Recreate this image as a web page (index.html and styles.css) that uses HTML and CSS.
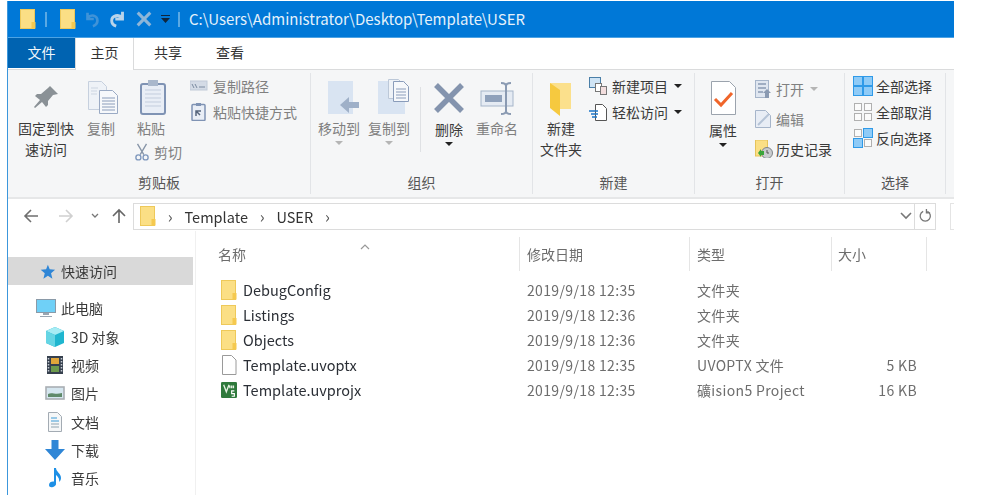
FILE: index.html
```html
<!DOCTYPE html>
<html lang="zh-CN">

<head>
    <meta charset="UTF-8">
    <title>USER</title>
    <link rel="stylesheet" href="styles.css">
</head>

<body>
    <svg class="defs" width="0" height="0">
        <symbol id="folder" viewBox="0 0 16 20">
            <rect x="0.5" y="0.5" width="14" height="19" fill="#fbdf85" stroke="#eec95a"/>
            <rect x="11.5" y="13" width="4" height="6.5" fill="#f5c94f"/>
        </symbol>
    </svg>

    <div class="window">
        <header class="titlebar">
            <svg class="t-folder"><use href="#folder"/></svg>
            <span class="t-sep"></span>
            <svg class="t-folder t-second"><use href="#folder"/></svg>
            <svg class="t-icon t-undo" viewBox="0 0 20 20"><path d="M5 3v7h7M5 9c4-5 11-3 11 3 0 3-2 5-5 6" fill="none" stroke="#3f93d8" stroke-width="3"/></svg>
            <svg class="t-icon" viewBox="0 0 20 20"><path d="M15 2v8H7M15 9c-4-5-12-3-12 3 0 3 2 5 5 6" fill="none" stroke="#b9d4ea" stroke-width="3.2"/></svg>
            <svg class="t-icon t-x" viewBox="0 0 20 20"><path d="M3 3l14 14M17 3L3 17" stroke="#8fb6d8" stroke-width="3.4"/></svg>
            <svg class="t-drop" viewBox="0 0 9 8"><path d="M0 0h9v1H0zM0 3h9L4.500 8z" fill="#10263c"/></svg>
            <span class="t-sep t-sep2"></span>
            <span class="t-path">C:\Users\Administrator\Desktop\Template\USER</span>
        </header>

        <nav class="tabs">
            <span class="tab tab-file">文件</span>
            <span class="tab tab-active">主页</span>
            <span class="tab tab-share">共享</span>
            <span class="tab tab-view">查看</span>
        </nav>

        <section class="ribbon">
            <div class="group group-clip">
                <div class="group-body">
                    <div class="big big-pin">
                        <svg class="big-icon" viewBox="0 0 40 40"><path d="M24 10l8 8-5 1-5 6 0 4-2 2-4-5-7 6-1-1 6-7-5-4 2-2 4 0 7-6z" fill="#8a9196"/></svg>
                        <span>固定到快<br>速访问</span>
                    </div>
                    <div class="big big-copy dim">
                        <svg class="big-icon" viewBox="0 0 40 40"><path d="M7.500 5.500h13l5 5v23h-18z" fill="#eef2f7" stroke="#c6d0de"/><path d="M18.500 14.500h13l5 5v18h-18z" fill="#f6f8fb" stroke="#9aaac4"/><path d="M21 22h13M21 25h13M21 28h13M21 31h13M21 34h13" stroke="#8a9cba"/><path d="M10 12h7M10 15h6M10 18h6" stroke="#ccd5e1"/></svg>
                        <span>复制</span>
                    </div>
                    <div class="paste-col">
                        <div class="big dim">
                            <svg class="big-icon" viewBox="0 0 40 40"><rect x="10" y="8" width="24" height="30" rx="2" fill="#e9eef6" stroke="#7f93b4" stroke-width="2"/><rect x="17" y="4" width="10" height="6" fill="#aab8cc"/><path d="M14 14h16M14 18h16M14 22h16M14 26h16M14 30h16" stroke="#c3cddd"/></svg>
                            <span>粘贴</span>
                        </div>
                        <div class="small dim cut">
                            <svg class="s-icon" viewBox="0 0 16 20"><path d="M3 1l7 12M13 1L6 13" stroke="#8795a8" stroke-width="1.500"/><circle cx="4" cy="16" r="2.800" fill="none" stroke="#7f98bd" stroke-width="1.500"/><circle cx="12" cy="16" r="2.800" fill="none" stroke="#7f98bd" stroke-width="1.500"/></svg>
                            <span>剪切</span>
                        </div>
                    </div>
                    <div class="small-col small-col-clip dim">
                        <div class="small">
                            <svg class="s-icon" viewBox="0 0 18 18"><rect x="0" y="4" width="17" height="9" fill="#d4dbe6" stroke="#c1cad8"/><path d="M2 7l2 4M5 7l2 4M9 10h6" stroke="#7a8aa0"/></svg>
                            <span>复制路径</span>
                        </div>
                        <div class="small">
                            <svg class="s-icon" viewBox="0 0 18 18"><rect x="2" y="1.500" width="13" height="16" rx="1" fill="#e9eef6" stroke="#7f93b4" stroke-width="1.500"/><rect x="6" y="0" width="5" height="3" fill="#7f93b4"/><path d="M6 13V8h5M6 8l4 4" stroke="#56657c" stroke-width="1.500" fill="none"/></svg>
                            <span>粘贴快捷方式</span>
                        </div>
                    </div>
                </div>
                <div class="group-label">剪贴板</div>
            </div>

            <div class="group group-org">
                <div class="group-body">
                    <div class="big big-move dim">
                        <svg class="big-icon" viewBox="0 0 40 40"><rect x="9" y="5" width="25" height="33" fill="#d9e4f2"/><path d="M21 30l9-8v5h10v6H30v5z" transform="translate(0 -1)" fill="#9fb0c8"/></svg>
                        <span>移动到</span>
                        <i class="caret caret-dim"></i>
                    </div>
                    <div class="big big-move dim">
                        <svg class="big-icon" viewBox="0 0 40 40"><rect x="9" y="5" width="27" height="33" fill="#d9e4f2"/><path d="M19.500 3.500h10l5 5v14h-15z" fill="#eef2f7" stroke="#bcc8d8"/><path d="M24.500 5.500h10l5 5v15h-15z" fill="#f6f8fb" stroke="#8a9cba"/><path d="M27 13h10M27 16h10M27 19h10M27 22h10" stroke="#8a9cba"/></svg>
                        <span>复制到</span>
                        <i class="caret caret-dim"></i>
                    </div>
                    <span class="vline"></span>
                    <div class="big big-del">
                        <svg class="big-icon" viewBox="0 0 40 40"><path d="M7 9l26 26M33 9L7 35" stroke="#8494ae" stroke-width="5.500"/></svg>
                        <span>删除</span>
                        <i class="caret"></i>
                    </div>
                    <div class="big big-ren dim">
                        <svg class="big-icon" viewBox="0 0 40 40"><rect x="4" y="15" width="32" height="15" fill="#e5ebf3" stroke="#a6b5ca"/><rect x="8" y="19" width="17" height="7" fill="#8fa1bb"/><path d="M29 8v29M24 7c3 0 5 1 5 3 0-2 2-3 5-3M24 38c3 0 5-1 5-3 0 2 2 3 5 3" stroke="#8a9ab2" stroke-width="2" fill="none"/></svg>
                        <span>重命名</span>
                    </div>
                </div>
                <div class="group-label">组织</div>
            </div>

            <div class="group group-new">
                <div class="group-body">
                    <div class="big big-newdir">
                        <svg class="big-icon" viewBox="0 0 40 40"><path d="M9 7h21v26H19v2z" fill="#fbe08c"/><path d="M9 7l10 7v26L9 32z" fill="#f6c93f"/></svg>
                        <span>新建<br>文件夹</span>
                    </div>
                    <div class="small-col">
                        <div class="small">
                            <svg class="s-icon" viewBox="0 0 18 18"><rect x="0.500" y="0.500" width="11" height="10" fill="#cfe4f5" stroke="#4a7fa8"/><rect x="6.500" y="6.500" width="6" height="8" fill="#fff" stroke="#777"/><rect x="11.500" y="9.500" width="6" height="8" fill="#f3dede" stroke="#777"/></svg>
                            <span>新建项目</span>
                            <i class="caret caret-side"></i>
                        </div>
                        <div class="small">
                            <svg class="s-icon" viewBox="0 0 18 18"><path d="M6.500 1.500h7l4 4v12h-11z" fill="#fff" stroke="#555"/><path d="M0 8h9M2 11h7M3 14h5" stroke="#1c76c8" stroke-width="1.300"/></svg>
                            <span>轻松访问</span>
                            <i class="caret caret-side"></i>
                        </div>
                    </div>
                </div>
                <div class="group-label">新建</div>
            </div>

            <div class="group group-open">
                <div class="group-body">
                    <div class="big big-prop">
                        <svg class="big-icon" viewBox="0 0 40 40"><path d="M8.500 5.500h18l6 6v27h-24z" fill="#fff" stroke="#9ba3ad"/><path d="M12 23l6 6 11-12" fill="none" stroke="#f0652a" stroke-width="3"/></svg>
                        <span>属性</span>
                        <i class="caret"></i>
                    </div>
                    <div class="open-col">
                        <div class="small dim">
                            <svg class="s-icon" viewBox="0 0 18 18"><rect x="0.500" y="0.500" width="13" height="17" fill="#dfe6f0" stroke="#a6b5ca"/><path d="M3 4h8M3 8h8M3 12h5" stroke="#8a9ab2" stroke-width="1.500"/><path d="M10 18v-5H8l4-4 4 4h-2v5z" fill="#8a9ab2"/></svg>
                            <span>打开</span>
                            <i class="caret caret-side caret-dim"></i>
                        </div>
                        <div class="small dim">
                            <svg class="s-icon" viewBox="0 0 18 18"><path d="M0.500 0.500h10l5 5v12h-15z" fill="#e8edf5" stroke="#a6b5ca"/><path d="M3 15L14 4" stroke="#b5c3d6" stroke-width="2"/></svg>
                            <span>编辑</span>
                        </div>
                        <div class="small">
                            <svg class="s-icon" viewBox="0 0 18 18"><rect x="0.500" y="0" width="12" height="16" fill="#fbdf85" stroke="#e6c35a"/><circle cx="12" cy="13" r="5.500" fill="#c9cccf" stroke="#7f8488"/><path d="M12 10v3h2" stroke="#555" fill="none"/><path d="M3 13l3-4v2h3v4H6v2z" fill="#3aa53a"/></svg>
                            <span>历史记录</span>
                        </div>
                    </div>
                </div>
                <div class="group-label">打开</div>
            </div>

            <div class="group group-sel">
                <div class="group-body">
                    <div class="small-col">
                        <div class="small">
                            <svg class="s-icon" viewBox="0 0 20 20"><g fill="#8fcbf7" stroke="#2f9ae8"><rect x="0.500" y="0.500" width="9" height="9"/><rect x="10.500" y="0.500" width="9" height="9"/><rect x="0.500" y="10.500" width="9" height="9"/><rect x="10.500" y="10.500" width="9" height="9"/></g></svg>
                            <span>全部选择</span>
                        </div>
                        <div class="small">
                            <svg class="s-icon" viewBox="0 0 20 20"><g fill="#fbfbfb" stroke="#b0b0b0"><rect x="1.500" y="1.500" width="7" height="7"/><rect x="11.500" y="1.500" width="7" height="7"/><rect x="1.500" y="11.500" width="7" height="7"/><rect x="11.500" y="11.500" width="7" height="7"/></g></svg>
                            <span>全部取消</span>
                        </div>
                        <div class="small">
                            <svg class="s-icon" viewBox="0 0 20 20"><g fill="#fbfbfb" stroke="#b0b0b0"><rect x="1.500" y="1.500" width="7" height="7"/><rect x="11.500" y="11.500" width="7" height="7"/></g><g fill="#8fcbf7" stroke="#2f9ae8"><rect x="10.500" y="0.500" width="9" height="9"/><rect x="0.500" y="10.500" width="9" height="9"/></g></svg>
                            <span>反向选择</span>
                        </div>
                    </div>
                </div>
                <div class="group-label">选择</div>
            </div>
        </section>

        <div class="addressrow">
            <svg class="nav-icon" viewBox="0 0 16 16"><path d="M15 8H2M8 2L2 8l6 6" fill="none" stroke="#6f6f6f" stroke-width="1.600"/></svg>
            <svg class="nav-icon nav-forward" viewBox="0 0 16 16"><path d="M1 8h13M8 2l6 6-6 6" fill="none" stroke="#d0d0d0" stroke-width="1.600"/></svg>
            <svg class="nav-chev" viewBox="0 0 8 6"><path d="M1 1l3 3 3-3" fill="none" stroke="#777" stroke-width="1.300"/></svg>
            <svg class="nav-icon nav-up" viewBox="0 0 16 16"><path d="M8 15V2M2 8l6-6 6 6" fill="none" stroke="#666" stroke-width="1.600"/></svg>
            <div class="addressbar">
                <svg class="addr-folder"><use href="#folder"/></svg>
                <span class="crumb-arrow">›</span>
                <span class="crumb">Template</span>
                <span class="crumb-arrow">›</span>
                <span class="crumb">USER</span>
                <span class="crumb-arrow">›</span>
                <svg class="addr-down" viewBox="0 0 12 8"><path d="M1 1l5 5 5-5" fill="none" stroke="#777" stroke-width="1.600"/></svg>
                <span class="addr-refresh">
                    <svg viewBox="0 0 14 16" width="13" height="15"><path d="M9 2.500a5.500 5.500 0 1 1-4.500 0M8 0v4h4" fill="none" stroke="#777" stroke-width="1.400"/></svg>
                </span>
            </div>
            <div class="searchbox"></div>
        </div>

        <div class="content">
            <aside class="navpane">
                <div class="nav-row nav-quick">
                    <svg class="n-icon" viewBox="0 0 20 20"><path d="M11 3l2 5 6 .5-4.500 4 1.500 6-5-3.200-5 3.200 1.500-6-4.500-4 6-.5z" fill="#2f86d6"/></svg>
                    <span>快速访问</span>
                </div>
                <div class="nav-row nav-pc">
                    <svg class="n-icon" viewBox="0 0 20 20"><rect x="0.500" y="1.500" width="19" height="13" fill="#6fd0f7" stroke="#8a9aa8"/><path d="M7 15h6v2H7zM4 18h12v1H4z" fill="#9aa6b2"/></svg>
                    <span>此电脑</span>
                </div>
                <div class="nav-row nav-sub">
                    <svg class="n-icon" viewBox="0 0 20 20"><path d="M10 0l9 4v12l-9 4-9-4V4z" fill="#1fb6cf"/><path d="M1 4l9 4 9-4-9-4z" fill="#a6ecf4"/><path d="M1 4l9 4v12l-9-4z" fill="#65d5e4"/></svg>
                    <span>3D 对象</span>
                </div>
                <div class="nav-row nav-sub">
                    <svg class="n-icon" viewBox="0 0 20 20"><rect x="2" y="1" width="16" height="18" fill="#36404e"/><rect x="6" y="3" width="8" height="6" fill="#e0a63a"/><rect x="6" y="11" width="8" height="6" fill="#6c9a4d"/><path d="M3.500 3v14M16.500 3v14" stroke="#c6ccd4" stroke-width="1.500" stroke-dasharray="1.500 1.500"/></svg>
                    <span>视频</span>
                </div>
                <div class="nav-row nav-sub">
                    <svg class="n-icon" viewBox="0 0 20 20"><rect x="1" y="4" width="18" height="12" fill="#d5e6ef" stroke="#a9aeb3" stroke-width="1.600"/><path d="M3 14v-3c4-2 7 1 14-1v4z" fill="#5f8a6a"/></svg>
                    <span>图片</span>
                </div>
                <div class="nav-row nav-sub">
                    <svg class="n-icon" viewBox="0 0 20 20"><path d="M3.500 .5h9l4 4v15h-13z" fill="#f5f7f8" stroke="#a3abb3"/><path d="M6 6h6M6 9h8" stroke="#3d9bd6"/><path d="M6 12h8M6 15h8" stroke="#8fa4b0"/></svg>
                    <span>文档</span>
                </div>
                <div class="nav-row nav-sub">
                    <svg class="n-icon" viewBox="0 0 20 20"><path d="M6.500 0h7v9H20L10 20 0 9h6.500z" fill="#2f86d6"/></svg>
                    <span>下载</span>
                </div>
                <div class="nav-row nav-sub">
                    <svg class="n-icon" viewBox="0 0 20 20"><path d="M9 0h2c0 4 5 5 5 10 0 2-1 3-2 4 1-4-2-6-3-7v9c0 3-7 5-7 1 0-3 3-4 5-3.500z" fill="#1e90e6"/></svg>
                    <span>音乐</span>
                </div>
            </aside>

            <main class="files">
                <div class="sort-arrow"><svg viewBox="0 0 10 6" width="10" height="6"><path d="M1 5l4-4 4 4" fill="none" stroke="#999" stroke-width="1.200"/></svg></div>
                <div class="cols cols-head">
                    <span class="col-name">名称</span>
                    <span class="col-date">修改日期</span>
                    <span class="col-type">类型</span>
                    <span class="col-size">大小</span>
                </div>
                <div class="cols file">
                    <span class="col-name"><svg class="f-icon"><use href="#folder"/></svg><b>DebugConfig</b></span>
                    <span class="col-date">2019/9/18 12:35</span>
                    <span class="col-type">文件夹</span>
                    <span class="col-size"></span>
                </div>
                <div class="cols file">
                    <span class="col-name"><svg class="f-icon"><use href="#folder"/></svg><b>Listings</b></span>
                    <span class="col-date">2019/9/18 12:36</span>
                    <span class="col-type">文件夹</span>
                    <span class="col-size"></span>
                </div>
                <div class="cols file">
                    <span class="col-name"><svg class="f-icon"><use href="#folder"/></svg><b>Objects</b></span>
                    <span class="col-date">2019/9/18 12:36</span>
                    <span class="col-type">文件夹</span>
                    <span class="col-size"></span>
                </div>
                <div class="cols file">
                    <span class="col-name"><svg class="f-icon" viewBox="0 0 16 20"><path d="M1.500 .5h9l4.500 4.500v14.500H1.500z" fill="#fff" stroke="#9a9a9a"/></svg><b>Template.uvoptx</b></span>
                    <span class="col-date">2019/9/18 12:35</span>
                    <span class="col-type">UVOPTX 文件</span>
                    <span class="col-size">5 KB</span>
                </div>
                <div class="cols file">
                    <span class="col-name"><svg class="f-icon f-keil" viewBox="0 0 18 18"><rect x="0" y="0" width="18" height="18" rx="1.500" fill="#2f7a3c"/><path d="M3 3l3 8 3-8M10 4v3M12 4v3M14 4v3" fill="none" stroke="#e6f2e4" stroke-width="1.500"/><path d="M15 10h-3v3h3v3h-3" fill="none" stroke="#fff" stroke-width="1.300"/></svg><b>Template.uvprojx</b></span>
                    <span class="col-date">2019/9/18 12:35</span>
                    <span class="col-type">礦ision5 Project</span>
                    <span class="col-size">16 KB</span>
                </div>
            </main>
        </div>
    </div>
</body>

</html>
```

FILE: styles.css
```css
/* page */
body {
    margin: 0;
    background: #fff;
    font-family: "Noto Sans CJK SC", "Noto Sans", sans-serif;
    font-size: 14px;
    color: #3a3a3a;
    overflow: hidden;
}

.defs {
    position: absolute;
}

/* the screenshot is slightly soft, so is this */
.window {
    width: 946px;
    height: 494px;
    margin: 1px 0 0 7px;
    border-left: 1px solid #3c97dc;
    overflow: hidden;
    filter: blur(0.35px);
}

/* title bar */
.titlebar {
    display: flex;
    align-items: center;
    height: 36px;
    background: #0078d7;
    border-bottom: 1px solid #4da3e4;
    padding-left: 12px;
}

.t-folder {
    width: 16px;
    height: 20px;
}

.t-sep {
    width: 2px;
    height: 15px;
    margin: 0 13px 0 9px;
    background: #5aa9e4;
}

.t-icon {
    width: 18px;
    height: 18px;
    margin-right: 8px;
}

.t-undo {
    margin-left: 7px;
}

.t-drop {
    width: 9px;
    height: 8px;
}

.t-sep2 {
    margin: 0 9px 0 8px;
}

.t-path {
    color: #e4f1fb;
    font-size: 15px;
    line-height: 18px;
}

/* tabs */
.tabs {
    display: flex;
    height: 31px;
    background: #fff;
    border-bottom: 1px solid #dadbdc;
}

.tab {
    line-height: 28px;
    color: #333;
}

.tab-file {
    width: 67px;
    height: 30px;
    text-align: center;
    background: #0063b1;
    color: #f2f7fb;
}

.tab-active {
    width: 59px;
    height: 32px;
    text-align: center;
    background: #fff;
    border: 1px solid #dadbdc;
    border-width: 0 1px 0 1px;
    box-sizing: border-box;
    position: relative;
    z-index: 1;
}

.tab-share {
    margin-left: 20px;
}

.tab-view {
    margin-left: 34px;
}

/* ribbon */
.ribbon {
    display: flex;
    height: 127px;
    background: #f5f6f7;
    border-bottom: 2px solid #e6e7e8;
}

.group {
    display: flex;
    flex-direction: column;
    box-sizing: border-box;
    margin-top: 3px;
    height: 121px;
    border-right: 1px solid #e2e4e7;
}

.group-clip {
    width: 303px;
}

.group-org {
    width: 222px;
}

.group-new {
    width: 162px;
}

.group-open {
    width: 150px;
}

.group-sel {
    width: 101px;
}

.group-body {
    display: flex;
    flex: 1;
    min-height: 0;
}

.group-label {
    height: 28px;
    line-height: 32px;
    text-align: center;
    color: #555;
}

.big {
    display: flex;
    flex-direction: column;
    align-items: center;
    line-height: 20.500px;
    text-align: center;
    flex: none;
}

.big-icon {
    width: 40px;
    height: 40px;
    margin: 3px 0 2px;
    flex: none;
}

.big-pin {
    width: 70px;
    margin-left: 3px;
}

.big-copy {
    width: 40px;
}

.paste-col {
    width: 60px;
}

.dim {
    color: #808080;
}

.small-col {
    display: flex;
    flex-direction: column;
    gap: 3px;
    margin-top: 1px;
}

.small-col-clip {
    margin-left: 9px;
}

.small {
    display: flex;
    align-items: center;
    height: 23px;
    white-space: nowrap;
}

.small > span {
    margin-left: 5px;
}

.s-icon {
    width: 18px;
    height: 18px;
    flex: none;
}

.cut {
    margin: 2px 0 0 12px;
}

.cut > span {
    margin-left: 3px;
}

.big-move {
    width: 50px;
}

.group-org .group-body {
    padding-left: 3px;
}

.vline {
    width: 1px;
    height: 65px;
    margin: 14px 10px 0 6px;
    background: #dfe1e4;
}

.big-del {
    width: 36px;
}

.big-del .big-icon {
    margin-bottom: 3px;
}

.big-ren {
    width: 60px;
}

.big-newdir {
    width: 56px;
}

.group-open .group-body {
    padding-left: 6px;
}

.big-prop {
    width: 44px;
}

.big-prop .big-icon {
    margin-bottom: 4px;
}

.open-col {
    display: flex;
    flex-direction: column;
    gap: 7px;
    margin: 4px 0 0 10px;
}

.open-col .small > span {
    margin-left: 3px;
}

.group-sel .group-body {
    padding-left: 8px;
}

.group-sel .s-icon {
    width: 20px;
    height: 20px;
}

.group-sel .small > span {
    margin-left: 3px;
}

.caret {
    display: block;
    width: 0;
    height: 0;
    margin-top: 2px;
    border: 4px solid transparent;
    border-top-color: #222;
    border-bottom-width: 0;
}

.caret-dim {
    border-top-color: #b5b5b5;
}

.caret-side {
    margin: 1px 0 0 6px;
}

/* address row */
.addressrow {
    display: flex;
    align-items: center;
    height: 30px;
    margin-top: 2px;
}

.addressrow > * {
    flex: none;
}

.nav-icon {
    width: 16px;
    height: 16px;
    margin-left: 15px;
}

.nav-forward {
    margin-left: 19px;
}

.nav-chev {
    width: 8px;
    height: 6px;
    margin-left: 17px;
}

.nav-up {
    margin-left: 12px;
}

.addressbar {
    display: flex;
    align-items: center;
    box-sizing: border-box;
    width: 803px;
    height: 27px;
    margin-left: 6px;
    border: 1px solid #dcdcdc;
    background: #fff;
    padding-left: 6px;
}

.addr-folder {
    width: 16px;
    height: 20px;
}

.crumb-arrow {
    width: 28.500px;
    text-align: center;
    color: #555;
    font-size: 16px;
    line-height: 20px;
}

.crumb {
    color: #333;
    font-size: 14.500px;
}

.addr-down {
    width: 12px;
    height: 8px;
    margin-left: auto;
    margin-right: 2px;
}

.addr-refresh {
    display: flex;
    align-items: center;
    justify-content: center;
    width: 20px;
    height: 25px;
    border-left: 1px solid #dcdcdc;
}

.searchbox {
    width: 20px;
    height: 27px;
    margin-left: 14px;
    box-sizing: border-box;
    border: 1px solid #e4e4e4;
    border-right: none;
}

/* lower panes */
.content {
    display: flex;
    height: 265px;
}

.navpane {
    width: 188px;
    box-sizing: border-box;
    border-right: 1px solid #f0f0f0;
    padding: 26px 2px 0 0;
}

.nav-row {
    display: flex;
    align-items: center;
    height: 28.300px;
    white-space: nowrap;
}

.nav-row > span {
    margin-left: 5px;
}

.n-icon {
    width: 20px;
    height: 20px;
    flex: none;
}

.nav-quick {
    background: #d9d9d9;
    padding-left: 30px;
    margin-bottom: 9px;
}

.nav-quick .n-icon {
    width: 18px;
}

.nav-pc {
    padding-left: 28px;
}

.nav-sub {
    padding-left: 37px;
}

.nav-sub > span {
    margin-left: 6px;
}

.files {
    flex: 1;
    position: relative;
    padding-top: 6px;
}

.sort-arrow {
    position: absolute;
    left: 164px;
    top: 3px;
}

.cols {
    display: flex;
    white-space: nowrap;
    color: #6d6d6d;
}

.cols span {
    box-sizing: border-box;
    display: flex;
    align-items: center;
}

.cols-head {
    height: 34px;
    margin-bottom: 6px;
}

.cols-head span {
    border-right: 1px solid #e5e5e5;
}

.col-name {
    width: 324px;
    padding-left: 22px;
}

.col-date {
    width: 170px;
    padding-left: 7px;
}

.col-type {
    width: 142px;
    padding-left: 7px;
}

.col-size {
    width: 95px;
    padding-left: 6px;
}

.file {
    height: 25px;
    letter-spacing: 0.35px;
}

.file .col-size {
    justify-content: flex-end;
    padding-right: 10px;
}

.file .col-name {
    padding-left: 25px;
}

.file b {
    font-weight: 400;
    font-size: 14.500px;
    letter-spacing: 0;
    color: #2b2f36;
}

.f-icon {
    width: 16px;
    height: 20px;
    margin-right: 6px;
}

.f-keil {
    height: 18px;
}
```
